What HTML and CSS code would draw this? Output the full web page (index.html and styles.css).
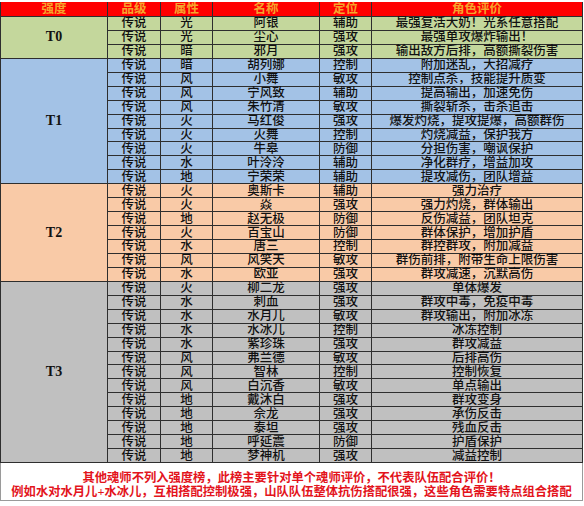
FILE: index.html
```html
<!DOCTYPE html>
<html lang="zh-CN">
<head>
<meta charset="utf-8">
<title>强度榜</title>
<link rel="stylesheet" href="styles.css">
</head>
<body>
<div class="sheet">
  <div class="grid">
    <div class="hd">强度</div><div class="hd">品级</div><div class="hd">属性</div><div class="hd">名称</div><div class="hd">定位</div><div class="hd">角色评价</div>

    <div class="tier t0 span3">T0</div>
    <div class="c t0">传说</div><div class="c t0">光</div><div class="c t0">阿银</div><div class="c t0">辅助</div><div class="c t0">最强复活大奶！光系任意搭配</div>
    <div class="c t0">传说</div><div class="c t0">光</div><div class="c t0">尘心</div><div class="c t0">强攻</div><div class="c t0">最强单攻爆炸输出！</div>
    <div class="c t0">传说</div><div class="c t0">暗</div><div class="c t0">邪月</div><div class="c t0">强攻</div><div class="c t0">输出敌方后排，高额撕裂伤害</div>

    <div class="tier t1 span9">T1</div>
    <div class="c t1">传说</div><div class="c t1">暗</div><div class="c t1">胡列娜</div><div class="c t1">控制</div><div class="c t1">附加迷乱，大招减疗</div>
    <div class="c t1">传说</div><div class="c t1">风</div><div class="c t1">小舞</div><div class="c t1">敏攻</div><div class="c t1">控制点杀，技能提升质变</div>
    <div class="c t1">传说</div><div class="c t1">风</div><div class="c t1">宁风致</div><div class="c t1">辅助</div><div class="c t1">提高输出，加速免伤</div>
    <div class="c t1">传说</div><div class="c t1">风</div><div class="c t1">朱竹清</div><div class="c t1">敏攻</div><div class="c t1">撕裂斩杀，击杀追击</div>
    <div class="c t1">传说</div><div class="c t1">火</div><div class="c t1">马红俊</div><div class="c t1">强攻</div><div class="c t1">爆发灼烧，提攻提爆，高额群伤</div>
    <div class="c t1">传说</div><div class="c t1">火</div><div class="c t1">火舞</div><div class="c t1">控制</div><div class="c t1">灼烧减益，保护我方</div>
    <div class="c t1">传说</div><div class="c t1">火</div><div class="c t1">牛皋</div><div class="c t1">防御</div><div class="c t1">分担伤害，嘲讽保护</div>
    <div class="c t1">传说</div><div class="c t1">水</div><div class="c t1">叶泠泠</div><div class="c t1">辅助</div><div class="c t1">净化群疗，增益加攻</div>
    <div class="c t1">传说</div><div class="c t1">地</div><div class="c t1">宁荣荣</div><div class="c t1">辅助</div><div class="c t1">提攻减伤，团队增益</div>

    <div class="tier t2 span7">T2</div>
    <div class="c t2">传说</div><div class="c t2">火</div><div class="c t2">奥斯卡</div><div class="c t2">辅助</div><div class="c t2">强力治疗</div>
    <div class="c t2">传说</div><div class="c t2">火</div><div class="c t2">焱</div><div class="c t2">强攻</div><div class="c t2">强力灼烧，群体输出</div>
    <div class="c t2">传说</div><div class="c t2">地</div><div class="c t2">赵无极</div><div class="c t2">防御</div><div class="c t2">反伤减益，团队坦克</div>
    <div class="c t2">传说</div><div class="c t2">火</div><div class="c t2">百宝山</div><div class="c t2">防御</div><div class="c t2">群体保护，增加护盾</div>
    <div class="c t2">传说</div><div class="c t2">水</div><div class="c t2">唐三</div><div class="c t2">控制</div><div class="c t2">群控群攻，附加减益</div>
    <div class="c t2">传说</div><div class="c t2">风</div><div class="c t2">风笑天</div><div class="c t2">敏攻</div><div class="c t2">群伤前排，附带生命上限伤害</div>
    <div class="c t2">传说</div><div class="c t2">水</div><div class="c t2">欧亚</div><div class="c t2">强攻</div><div class="c t2">群攻减速，沉默高伤</div>

    <div class="tier t3 span13">T3</div>
    <div class="c t3">传说</div><div class="c t3">火</div><div class="c t3">柳二龙</div><div class="c t3">强攻</div><div class="c t3">单体爆发</div>
    <div class="c t3">传说</div><div class="c t3">水</div><div class="c t3">刺血</div><div class="c t3">强攻</div><div class="c t3">群攻中毒，免疫中毒</div>
    <div class="c t3">传说</div><div class="c t3">水</div><div class="c t3">水月儿</div><div class="c t3">敏攻</div><div class="c t3">群攻输出，附加冰冻</div>
    <div class="c t3">传说</div><div class="c t3">水</div><div class="c t3">水冰儿</div><div class="c t3">控制</div><div class="c t3">冰冻控制</div>
    <div class="c t3">传说</div><div class="c t3">水</div><div class="c t3">紫珍珠</div><div class="c t3">强攻</div><div class="c t3">群攻减益</div>
    <div class="c t3">传说</div><div class="c t3">风</div><div class="c t3">弗兰德</div><div class="c t3">敏攻</div><div class="c t3">后排高伤</div>
    <div class="c t3">传说</div><div class="c t3">风</div><div class="c t3">智林</div><div class="c t3">控制</div><div class="c t3">控制恢复</div>
    <div class="c t3">传说</div><div class="c t3">风</div><div class="c t3">白沉香</div><div class="c t3">敏攻</div><div class="c t3">单点输出</div>
    <div class="c t3">传说</div><div class="c t3">地</div><div class="c t3">戴沐白</div><div class="c t3">强攻</div><div class="c t3">群攻变身</div>
    <div class="c t3">传说</div><div class="c t3">地</div><div class="c t3">佘龙</div><div class="c t3">强攻</div><div class="c t3">承伤反击</div>
    <div class="c t3">传说</div><div class="c t3">地</div><div class="c t3">泰坦</div><div class="c t3">强攻</div><div class="c t3">残血反击</div>
    <div class="c t3">传说</div><div class="c t3">地</div><div class="c t3">呼延震</div><div class="c t3">防御</div><div class="c t3">护盾保护</div>
    <div class="c t3">传说</div><div class="c t3">地</div><div class="c t3">梦神机</div><div class="c t3">强攻</div><div class="c t3">减益控制</div>
  </div>
  <div class="note">
    <p>其他魂师不列入强度榜，此榜主要针对单个魂师评价，不代表队伍配合评价！</p>
    <p>例如水对水月儿+水冰儿，互相搭配控制极强，山队队伍整体抗伤搭配很强，这些角色需要特点组合搭配</p>
  </div>
</div>
</body>
</html>
```

FILE: styles.css
```css
html, body {
  margin: 0;
  padding: 0;
  background: #ffffff;
}

body {
  font-family: "Liberation Serif", "Noto Sans CJK SC", serif;
  color: #111111;
}

.sheet {
  width: 583px;
  padding-top: 2px;
}

.grid {
  display: grid;
  grid-template-columns: 106px 52px 51px 106px 51px 210px;
  grid-template-rows: 14px repeat(32, 12.94px);
  gap: 1px;
  padding: 0 1px 1px 1px;
  background: #2e2e2e;
}

.hd,
.c,
.tier {
  display: flex;
  align-items: center;
  justify-content: center;
  white-space: nowrap;
}

.hd {
  background: #ff0000;
  color: #f6a52c;
  font-weight: bold;
  font-size: 12.5px;
  line-height: 13px;
}

.c {
  font-size: 12.5px;
  line-height: 12px;
  font-weight: 500;
}

.tier {
  font-weight: bold;
  font-size: 14px;
  line-height: 14px;
}

.span3 { grid-row: span 3; }
.span7 { grid-row: span 7; }
.span9 { grid-row: span 9; }
.span13 { grid-row: span 13; }

.t0 { background: #c4d79c; }
.t1 { background: #a3c2e6; }
.t2 { background: #f9caa7; }
.t3 { background: #c0c0c0; }

.note {
  border: 1px solid #9a9a9a;
  border-top: none;
  padding: 8px 0 1px;
  text-align: center;
  color: #e3141c;
  font-weight: bold;
  font-size: 12.3px;
  line-height: 14px;
}

.note p {
  margin: 0;
  white-space: nowrap;
}
```
